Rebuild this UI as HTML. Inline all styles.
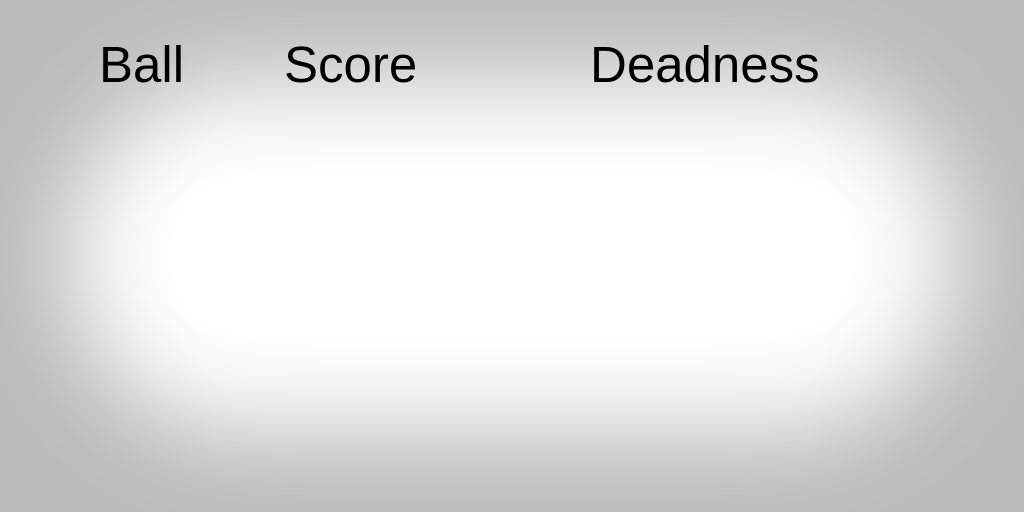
<!DOCTYPE html>
<html>
<head>
<meta charset="utf-8">
<style>
html,body{margin:0;padding:0;}
body{width:1024px;height:512px;overflow:hidden;background:#bbbbbb;position:relative;font-family:"Liberation Sans",sans-serif;}
.glow{position:absolute;left:70px;top:80px;width:884px;height:352px;background:#fff;border-radius:170px;filter:blur(50px);}
.t{position:absolute;top:35px;font-size:51px;color:#000;letter-spacing:0px;}
</style>
</head>
<body>
<div class="glow"></div>
<div class="t" style="left:99px">Ball</div>
<div class="t" style="left:284px">Score</div>
<div class="t" style="left:590px">Deadness</div>
</body>
</html>
